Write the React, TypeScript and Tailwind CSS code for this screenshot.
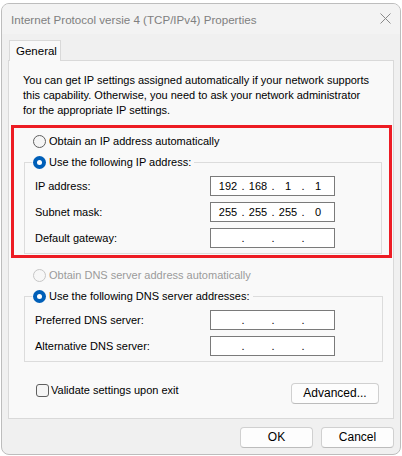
import React from "react";

function Radio({ checked, disabled }: { checked?: boolean; disabled?: boolean }) {
  if (checked)
    return (
      <span className="w-[13px] h-[13px] shrink-0 rounded-full bg-[#005fb8] flex items-center justify-center">
        <span className="w-[5px] h-[5px] rounded-full bg-white" />
      </span>
    );
  return (
    <span
      className={`w-[13px] h-[13px] shrink-0 rounded-full border ${
        disabled ? "border-[#c6c6c6] bg-[#f7f7f7]" : "border-[#5f5f5f] bg-[#f5f5f5]"
      }`}
    />
  );
}

function IpField({ parts }: { parts?: string[] }) {
  const p = parts ?? ["", "", "", ""];
  return (
    <div className="w-[125px] h-[20px] border border-[#7a7a7a] bg-white flex items-center pl-[4px]">
      {p.map((v, i) => (
        <React.Fragment key={i}>
          <span className="w-[26px] text-center">{v}</span>
          {i < 3 && <span className="w-[4px] text-center">.</span>}
        </React.Fragment>
      ))}
    </div>
  );
}

function Row({ label, parts }: { label: string; parts?: string[] }) {
  return (
    <div className="flex items-center h-[20px]">
      <span className="w-[175px]">{label}</span>
      <IpField parts={parts} />
    </div>
  );
}

function Group({ legend, children }: { legend: string; children: React.ReactNode }) {
  return (
    <fieldset className="border border-[#dcdcdc] px-[10px] pb-[5px]">
      <legend className="ml-[-3px] pr-[3px] pl-[1px] h-[16px] flex items-center gap-[3px]">
        <Radio checked />
        <span>{legend}</span>
      </legend>
      <div className="flex flex-col gap-[6px] mt-[6px]">{children}</div>
    </fieldset>
  );
}

function Button({ children, w }: { children: React.ReactNode; w: string }) {
  return (
    <button
      className={`${w} h-[21px] rounded-[4px] border border-[#d0d0d0] border-b-[#bcbcbc] bg-[#fdfdfd] text-[12px] text-black flex items-center justify-center`}
    >
      {children}
    </button>
  );
}

export default function App() {
  return (
    <div className="w-[402px] h-[456px] bg-white pt-[3px] pl-[1px] font-['Liberation_Sans',Arial,sans-serif] text-[11px] leading-[13px] text-black">
      <div className="w-[400px] h-[452px] border border-[#bdbdbd] rounded-[8px] bg-[#f0f0f0] overflow-hidden flex flex-col">
        {/* title bar */}
        <div className="h-[30px] flex items-center justify-between pl-[9px] pr-[9px] bg-[#f3f3f3]">
          <span className="text-[11.6px] text-[#808080]">Internet Protocol versie 4 (TCP/IPv4) Properties</span>
          <svg width="11" height="11" viewBox="0 0 11 11" className="mt-[-2px]">
            <path d="M0.5 0.5 L10.5 10.5 M10.5 0.5 L0.5 10.5" stroke="#8a8a8a" strokeWidth="1" />
          </svg>
        </div>

        <div className="px-[6px] pt-[6px] flex flex-col">
          {/* tab */}
          <div className="ml-[1px] w-[52px] h-[21px] border border-b-0 border-[#d9d9d9] bg-[#f9f9f9] relative z-10 mb-[-1px] flex items-center pl-[6px] text-[11.5px]">
            General
          </div>

          {/* tab page */}
          <div className="border border-[#d9d9d9] bg-[#f9f9f9] h-[359px] flex flex-col">
            <p className="pt-[12px] pl-[14px] pr-[10px] leading-[15px]">
              You can get IP settings assigned automatically if your network supports
              <br />
              this capability. Otherwise, you need to ask your network administrator
              <br />
              for the appropriate IP settings.
            </p>

            {/* highlighted block */}
            <div className="mt-[7px] ml-[2px] mr-[1px] border-[3px] border-[#ed1c24] pb-[1px]">
              <div className="h-[26px] flex items-center gap-[3px] pl-[19px]">
                <Radio />
                <span>Obtain an IP address automatically</span>
              </div>
              <div className="ml-[10px] mr-[7px]">
                <Group legend="Use the following IP address:">
                  <Row label="IP address:" parts={["192", "168", "1", "1"]} />
                  <Row label="Subnet mask:" parts={["255", "255", "255", "0"]} />
                  <Row label="Default gateway:" />
                </Group>
              </div>
            </div>

            <div className="mt-[4px] h-[26px] flex items-center gap-[3px] pl-[24px] text-[#9b9b9b]">
              <Radio disabled />
              <span>Obtain DNS server address automatically</span>
            </div>
            <div className="ml-[15px] mr-[10px]">
              <Group legend="Use the following DNS server addresses:">
                <Row label="Preferred DNS server:" />
                <Row label="Alternative DNS server:" />
              </Group>
            </div>

            <div className="flex items-start justify-between pt-[20px] pl-[27px] pr-[14px]">
              <label className="mt-[2px] flex items-center gap-[2px] h-[13px]">
                <span className="w-[13px] h-[13px] rounded-[3px] border border-[#5f5f5f] bg-[#f5f5f5]" />
                <span>Validate settings upon exit</span>
              </label>
              <div className="mt-[1px]">
                <Button w="w-[88px]">Advanced...</Button>
              </div>
            </div>
          </div>
        </div>

        {/* dialog buttons */}
        <div className="flex justify-end gap-[8px] pt-[8px] pr-[6px]">
          <Button w="w-[73px]">OK</Button>
          <Button w="w-[73px]">Cancel</Button>
        </div>
      </div>
    </div>
  );
}
